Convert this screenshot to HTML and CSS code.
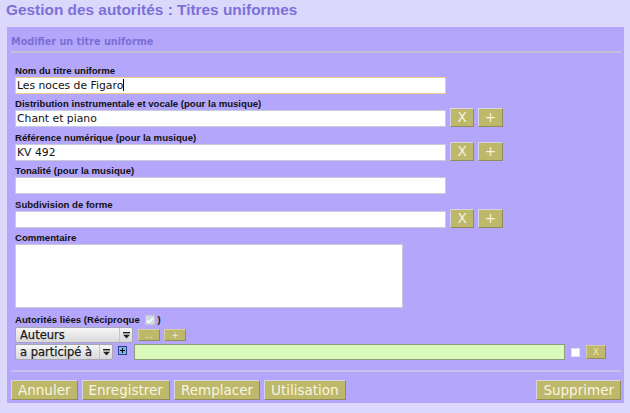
FILE: index.html
```html
<!DOCTYPE html>
<html lang="fr">
<head>
<meta charset="utf-8">
<title>Gestion des autorités</title>
<link rel="stylesheet" href="styles.css">
</head>
<body>
<h1 class="page-title">Gestion des autorités : Titres uniformes</h1>
<div class="panel">
  <div class="panel-head">Modifier un titre uniforme</div>
  <div class="rule"></div>
  <div class="form">
    <div class="field">
      <label class="lbl">Nom du titre uniforme</label>
      <div class="row"><div class="text focus">Les noces de Figaro<span class="caret"></span></div></div>
    </div>
    <div class="field">
      <label class="lbl">Distribution instrumentale et vocale (pour la musique)</label>
      <div class="row"><div class="text">Chant et piano</div><button class="sq">X</button><button class="sq plus">+</button></div>
    </div>
    <div class="field">
      <label class="lbl">Référence numérique (pour la musique)</label>
      <div class="row"><div class="text">KV 492</div><button class="sq">X</button><button class="sq plus">+</button></div>
    </div>
    <div class="field">
      <label class="lbl">Tonalité (pour la musique)</label>
      <div class="row"><div class="text"></div></div>
    </div>
    <div class="field">
      <label class="lbl">Subdivision de forme</label>
      <div class="row"><div class="text"></div><button class="sq">X</button><button class="sq plus">+</button></div>
    </div>
    <div class="field">
      <label class="lbl">Commentaire</label>
      <div class="area"></div>
    </div>
    <div class="linked">
      <label class="lbl">Autorités liées (Réciproque <span class="chk-dis"><svg width="8" height="7" viewBox="0 0 8 7"><path d="M1 3.5 L3 5.5 L7 1" fill="none" stroke="#fff" stroke-width="1.3"/></svg></span>)</label>
      <div class="lrow1">
        <div class="sel w1"><span class="sel-text">Auteurs</span><span class="sel-arrow"><svg width="7" height="7" viewBox="0 0 7 7"><rect x="0" y="0" width="7" height="1.4" fill="#222"/><path d="M0 2.8 H7 L3.5 6.5 Z" fill="#222"/></svg></span></div>
        <button class="mini">...</button>
        <button class="mini">+</button>
      </div>
      <div class="lrow2">
        <div class="sel w2"><span class="sel-text">a participé à</span><span class="sel-arrow"><svg width="7" height="7" viewBox="0 0 7 7"><rect x="0" y="0" width="7" height="1.4" fill="#222"/><path d="M0 2.8 H7 L3.5 6.5 Z" fill="#222"/></svg></span></div>
        <span class="add-icon"><svg width="9" height="9" viewBox="0 0 9 9"><rect x="0.5" y="0.5" width="8" height="8" fill="#7db4ee" stroke="#27408a"/><path d="M4.5 2 V7 M2 4.5 H7" stroke="#000" stroke-width="1"/></svg></span>
        <div class="green"></div>
        <span class="cbox"></span>
        <button class="xsmall">X</button>
      </div>
    </div>
  </div>
  <div class="rule rule2"></div>
  <div class="actions">
    <button class="act">Annuler</button>
    <button class="act">Enregistrer</button>
    <button class="act">Remplacer</button>
    <button class="act">Utilisation</button>
    <button class="act right">Supprimer</button>
  </div>
</div>
</body>
</html>
```
FILE: styles.css
```css
body {
  margin: 0;
  background: #dcd8fc;
  font-family: "DejaVu Sans", sans-serif;
}
.page-title {
  margin: 0;
  box-sizing: border-box;
  height: 27px;
  padding: 1px 0 0 6px;
  font: bold 15.4px/17.7px "Liberation Sans", Arial, sans-serif;
  color: #7b70d8;
}
.panel {
  margin: 0 6px 0 7px;
  background: #b4a6fb;
  padding: 9.4px 3px 3px 4px;
}
.panel-head {
  font: bold 9.7px/11.3px "DejaVu Sans", sans-serif;
  color: #7a6fd6;
}
.rule {
  height: 2px;
  background: #c5bfdc;
  margin-top: 3.3px;
}
.form {
  padding: 12px 0 0 4px;
}
.field + .field {
  margin-top: 4.4px;
}
.lbl {
  display: block;
  font: bold 9.6px/11px "Liberation Sans", Arial, sans-serif;
  color: #111;
  margin-bottom: 1px;
}
.row {
  display: flex;
  align-items: flex-end;
  gap: 4px;
  height: 17px;
}
.text {
  flex: none;
  box-sizing: border-box;
  width: 431px;
  height: 17px;
  border: 1px solid #c6ccd8;
  background: #fff;
  font: 10.8px/15px "DejaVu Sans", sans-serif;
  color: #111;
  padding: 0 1px;
  white-space: nowrap;
}
.text.focus {
  border-color: #f0cf84;
}
.caret {
  display: inline-block;
  width: 1px;
  height: 12px;
  background: #000;
  vertical-align: -2px;
}
.sq {
  flex: none;
  box-sizing: border-box;
  width: 24px;
  height: 19px;
  padding: 0;
  border: 1px solid;
  border-color: #d9d3e6 #8f8b5a #8f8b5a #d9d3e6;
  background: #bdb86a;
  color: #f6f3e0;
  font: 13.5px/17px "DejaVu Sans", sans-serif;
}
.sq.plus {
  width: 25px;
}
.area {
  box-sizing: border-box;
  width: 388px;
  height: 64px;
  border: 1px solid #c6ccd8;
  background: #fff;
}
.linked {
  margin-top: 6px;
}
.linked .lbl {
  margin-bottom: 2px;
}
.chk-dis {
  display: inline-flex;
  align-items: center;
  justify-content: center;
  box-sizing: border-box;
  width: 10px;
  height: 10px;
  margin: 0 2px 0 3px;
  vertical-align: -1px;
  background: #d4d8e4;
  border: 1px solid #c4c8d4;
  border-radius: 1px;
}
.lrow1, .lrow2 {
  display: flex;
  align-items: center;
}
.lrow2 {
  margin-top: 1px;
}
.sel {
  position: relative;
  box-sizing: border-box;
  height: 16px;
  border: 1px solid #a8a8b4;
  border-radius: 2px;
  background: linear-gradient(#f6f6f6, #d9d9dc);
  font: 11.5px/14px "DejaVu Sans", sans-serif;
  color: #1a1a1a;
  padding-left: 4px;
  display: flex;
  align-items: center;
}
.sel.w1 { width: 118px; }
.sel.w2 { width: 98px; }
.sel-text {
  flex: 1;
  white-space: nowrap;
  overflow: hidden;
  -webkit-text-stroke: 0.25px #1a1a1a;
}
.sel-arrow {
  display: flex;
  align-items: center;
  justify-content: center;
  width: 12px;
  height: 100%;
  border-left: 1px solid #c4c4cc;
}
.mini {
  box-sizing: border-box;
  height: 12px;
  width: 22px;
  padding: 0;
  margin-left: 5px;
  border: 1px solid;
  border-color: #d4cfa0 #8f8b5a #8f8b5a #d4cfa0;
  background: #bdb86a;
  color: #f4f0d8;
  font: 8px/9px "DejaVu Sans", sans-serif;
}
.mini + .mini {
  margin-left: 4px;
}
.add-icon {
  display: flex;
  margin-left: 5px;
  margin-top: -3px;
}
.green {
  box-sizing: border-box;
  width: 431px;
  height: 16px;
  margin-left: 7px;
  background: #dafabb;
  border: 1px solid #8e9c80;
}
.cbox {
  box-sizing: border-box;
  width: 9px;
  height: 9px;
  margin-left: 6px;
  background: #fff;
  border: 1px solid #e0e0ee;
}
.xsmall {
  box-sizing: border-box;
  width: 20px;
  height: 14px;
  padding: 0;
  margin-left: 6px;
  border: 1px solid;
  border-color: #d4cfa0 #8f8b5a #8f8b5a #d4cfa0;
  background: #bdb86a;
  color: #e8e4c0;
  font: 9px/12px "DejaVu Sans", sans-serif;
}
.rule2 {
  height: 1.5px;
  background: #cac2ea;
  margin-top: 10px;
}
.actions {
  display: flex;
  gap: 4px;
  margin-top: 8px;
}
.act {
  box-sizing: border-box;
  height: 20px;
  padding: 0 6px;
  border: 1px solid;
  border-color: #d9d3e6 #8f8b5a #8f8b5a #d9d3e6;
  background: #bdb86a;
  color: #f8f5e4;
  font: 13.5px/18px "DejaVu Sans", sans-serif;
}
.act.right {
  margin-left: auto;
}
```
